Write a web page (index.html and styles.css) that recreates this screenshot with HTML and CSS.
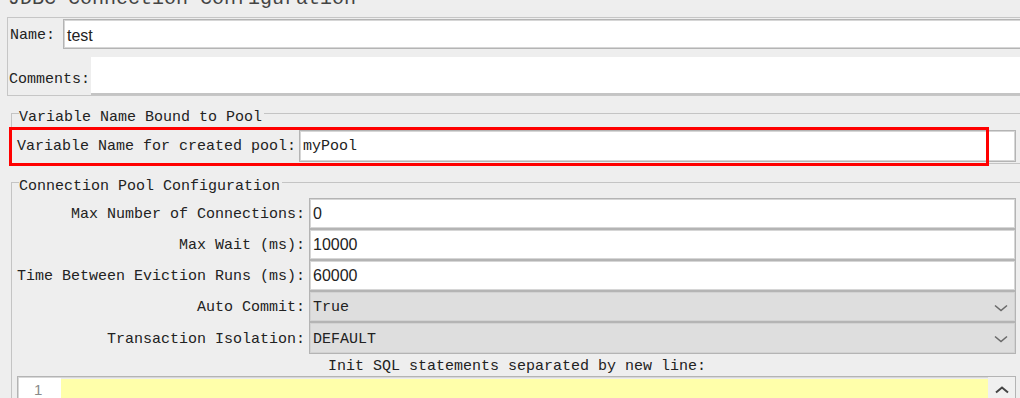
FILE: index.html
```html
<!DOCTYPE html>
<html lang="en">
<head>
  <meta charset="utf-8" />
  <title>JDBC Connection Configuration</title>
  <link rel="stylesheet" href="styles.css">
</head>
<body>
  <div class="title">JDBC Connection Configuration</div>

  <div class="name-panel">
    <div class="name-row">
      <label class="name-label">Name:</label>
      <div class="text-input sans">test</div>
    </div>
    <div class="comments-row">
      <label>Comments:</label>
      <div class="comments-box"></div>
    </div>
  </div>

  <div class="group pool-var">
    <div class="group-title">Variable Name Bound to Pool</div>
    <div class="var-row">
      <label>Variable Name for created pool:</label>
      <div class="text-input">myPool</div>
    </div>
    <div class="highlight"></div>
  </div>

  <div class="group pool-config">
    <div class="group-title">Connection Pool Configuration</div>
    <div class="form-grid">
      <label>Max Number of Connections:</label>
      <div class="text-input sans">0</div>

      <label>Max Wait (ms):</label>
      <div class="text-input sans">10000</div>

      <label>Time Between Eviction Runs (ms):</label>
      <div class="text-input sans">60000</div>

      <label>Auto Commit:</label>
      <div class="combo">
        <span>True</span>
        <svg width="14" height="8" viewBox="0 0 14 8"><path d="M1 1.5 L7 6.5 L13 1.5" fill="none" stroke="#6a6a6a" stroke-width="1.6"/></svg>
      </div>

      <label>Transaction Isolation:</label>
      <div class="combo">
        <span>DEFAULT</span>
        <svg width="14" height="8" viewBox="0 0 14 8"><path d="M1 1.5 L7 6.5 L13 1.5" fill="none" stroke="#6a6a6a" stroke-width="1.6"/></svg>
      </div>
    </div>

    <div class="sql-caption">Init SQL statements separated by new line:</div>
    <div class="sql-editor">
      <div class="gutter">1</div>
      <div class="sql-text"></div>
      <div class="scrollbar">
        <svg width="14" height="8" viewBox="0 0 14 8"><path d="M1 6.5 L7 1.5 L13 6.5" fill="none" stroke="#444" stroke-width="2"/></svg>
      </div>
    </div>
  </div>
</body>
</html>
```

FILE: styles.css
```css
body {
  margin: 0;
  background-color: #eeeeee;
  color: #222222;
  font-family: 'Liberation Mono', monospace;
  font-size: 15px;
  overflow: hidden;
  height: 398px;
}
label {
  white-space: nowrap;
}
.title {
  font-size: 20px;
  line-height: 24px;
  height: 24px;
  margin: -13px 0 0 8px;
  color: #444444;
  white-space: nowrap;
}
.name-panel {
  margin: 6px -30px 0 7px;
  border: 1px solid #c6c6c6;
  padding: 1px 0 0 2px;
}
.name-row {
  display: flex;
  align-items: center;
  height: 30px;
}
.name-label {
  width: 53px;
  padding-top: 2px;
}
.name-row .text-input {
  flex: 1;
  padding-top: 3px;
}
.comments-row {
  display: flex;
  align-items: center;
  margin-top: 8px;
  height: 38px;
}
.comments-row label {
  margin-left: -1px;
  padding-top: 6px;
  width: 82px;
}
.comments-box {
  flex: 1;
  height: 36px;
  background: #ffffff;
  border-bottom: 2px solid #c4c4c4;
}
.text-input {
  height: 100%;
  box-sizing: border-box;
  background: #ffffff;
  border: 1px solid #b4b4b4;
  box-shadow: inset 0 0 0 1px #d6d6d6;
  padding: 0 3px;
  display: flex;
  align-items: center;
  white-space: nowrap;
}
.sans {
  font-family: 'Liberation Sans', Arial, sans-serif;
  font-size: 16px;
}
.group {
  position: relative;
  margin-left: 11px;
  border-top: 1px solid #c4c4c4;
  border-left: 1px solid #c4c4c4;
  padding: 0 4px 0 0;
}
.group-title {
  width: max-content;
  background: #eeeeee;
  line-height: 18px;
  height: 18px;
  margin: -5px 0 0 7px;
  padding: 0 2px 0 0;
  color: #222222;
}
.pool-var {
  margin-top: 17px;
  border-bottom: 1px solid #c4c4c4;
  padding-bottom: 1px;
}
.var-row {
  display: flex;
  align-items: center;
  height: 32px;
  margin: 3px 0 0 5px;
}
.var-row label {
  width: 282px;
}
.var-row .text-input {
  flex: 1;
  padding-top: 1px;
}
.highlight {
  position: absolute;
  left: -3px;
  top: 13px;
  width: 980px;
  height: 39px;
  box-sizing: border-box;
  border: 3px solid #ff0000;
}
.pool-config {
  margin-top: 18px;
}
.form-grid {
  display: grid;
  grid-template-columns: 292px 1fr;
  grid-template-rows: 31px 31px 31px 31px 32px;
  margin: 2px 0 0 5px;
}
.form-grid label {
  text-align: right;
  padding-right: 4px;
  align-self: center;
  padding-top: 2px;
}
.combo {
  display: flex;
  align-items: center;
  justify-content: space-between;
  box-sizing: border-box;
  background: #dedede;
  border: 1px solid #b4b4b4;
  box-shadow: inset 0 0 0 1px #d2d2d2;
  padding: 2px 7px 0 3px;
}
.sql-caption {
  height: 22px;
  box-sizing: border-box;
  padding: 4px 0 0 6px;
  line-height: 18px;
  text-align: center;
}
.sql-editor {
  display: flex;
  height: 30px;
  margin-left: 5px;
  border: 1px solid #b4b4b4;
  box-shadow: inset 0 0 0 1px #d8d8d8;
}
.gutter {
  width: 42px;
  background: #ffffff;
  color: #8a8a8a;
  font-family: 'Liberation Sans', Arial, sans-serif;
  font-size: 15px;
  line-height: 17px;
  padding: 3px 0 0 15px;
  box-sizing: border-box;
  margin: 1px 0 0 1px;
}
.sql-text {
  flex: 1;
  background: #ffffaa;
  margin-top: 2px;
}
.scrollbar {
  width: 27px;
  display: flex;
  justify-content: center;
  padding-top: 9px;
  background: #f0f0f0;
}
```
